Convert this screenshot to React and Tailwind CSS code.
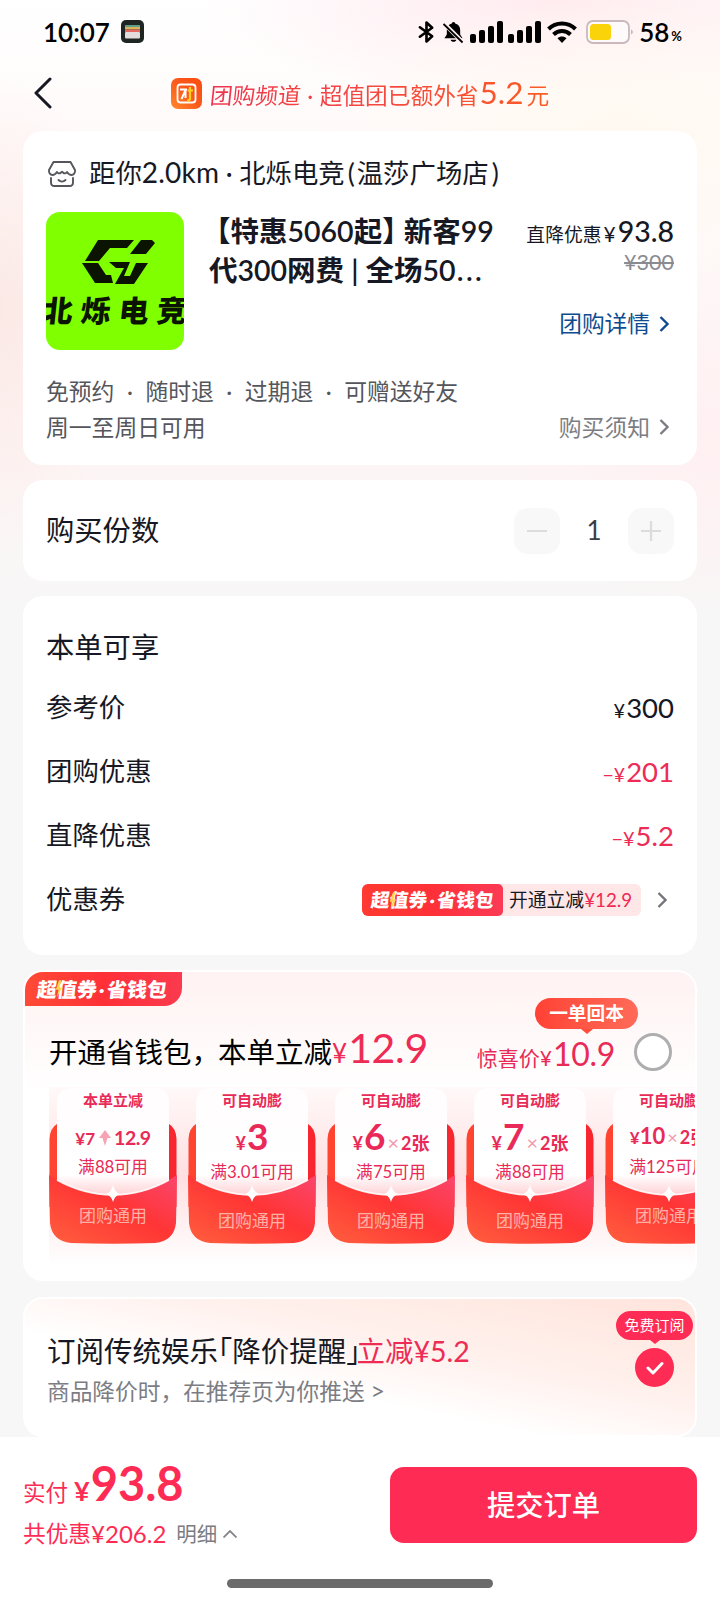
import React, { useState } from 'react';

const coupons = [
  { title: '本单立减', from: '7', to: '12.9', limit: '满88可用' },
  { title: '可自动膨', amount: '3', limit: '满3.01可用' },
  { title: '可自动膨', amount: '6', count: '2张', limit: '满75可用' },
  { title: '可自动膨', amount: '7', count: '2张', limit: '满88可用' },
  { title: '可自动膨', amount: '10', count: '2张', limit: '满125可用', small: true },
];

const Chevron = ({ className }) => (
  <svg viewBox="0 0 10 16" className={className} fill="none" stroke="currentColor" strokeWidth="2.4">
    <path d="M1.5 1 L8.5 8 L1.5 15" />
  </svg>
);

const Signal = () => (
  <svg viewBox="0 0 34 22" className="h-[22px] w-[34px] shrink-0">
    <rect x="0" y="13" width="6" height="9" rx="2" />
    <rect x="9" y="9" width="6" height="13" rx="2" />
    <rect x="18" y="5" width="6" height="17" rx="2" />
    <rect x="27" y="0" width="6" height="22" rx="2" />
  </svg>
);

const StatusBar = () => (
  <div className="flex h-16 items-center pl-[43px] pr-[38px] text-black">
    <span className="w-[78px] text-[26px] font-semibold leading-none">10:07</span>
    <svg viewBox="0 0 24 24" className="h-6 w-6">
      <rect width="23" height="23" rx="5" fill="#1f2523" />
      <rect x="4" y="5" width="15" height="3" fill="#5f9f8a" />
      <rect x="4" y="7" width="15" height="2.5" fill="#d8b45c" />
      <rect x="4" y="9.5" width="15" height="2.5" fill="#e2685f" />
      <rect x="4" y="12" width="15" height="6.5" rx="1" fill="#e3dcdc" />
    </svg>
    <div className="ml-auto flex items-center">
      <svg viewBox="0 0 18 24" className="mr-[8px] h-6 w-[17px]" fill="none" stroke="#000" strokeWidth="2.8" strokeLinejoin="round" strokeLinecap="round">
        <path d="M2 7 L15 16.5 L9 22 V2 L15 7.5 L2 17" />
      </svg>
      <svg viewBox="0 0 22 24" className="mr-[6px] h-6 w-[21px]">
        <path d="M11 1.5 c1.2 0 1.6.8 1.8 1.6 C16.5 4.2 18 7 18 10 V14.5 L20.5 18.5 H1.5 L4 14.5 V10 C4 7 5.5 4.2 9.2 3.1 C9.4 2.3 9.8 1.5 11 1.5 Z M8 20 h6 c-.5 3-5.5 3-6 0 Z" />
        <path d="M0.5 2.5 L20.5 22.5" stroke="#fff3f4" strokeWidth="4.5" />
        <path d="M0.5 3.5 L20.5 23" stroke="#000" strokeWidth="1.9" />
      </svg>
      <Signal />
      <span className="w-1" />
      <Signal />
      <svg viewBox="0 0 30 23" className="ml-[5px] h-[23px] w-[30px]" fill="none" stroke="#000" strokeWidth="4">
        <path d="M1.5 8 C9 0.6 21 0.6 28.5 8" />
        <path d="M6.5 13.5 C11.5 8.8 18.5 8.8 23.5 13.5" />
        <path d="M10.5 17.2 C13 15 17 15 19.5 17.2 L15 22 Z" fill="#000" stroke="none" />
      </svg>
      <svg viewBox="0 0 48 24" className="ml-[9px] h-6 w-12">
        <rect x="1" y="1" width="42" height="22" rx="6" fill="#fffafa" stroke="#c9b9bf" strokeWidth="1.8" />
        <rect x="4" y="4" width="21" height="16" rx="3.5" fill="#fad30a" />
        <path d="M45 9.5 c2.5 1 2.5 4 0 5 Z" fill="#c9b9bf" />
      </svg>
      <span className="ml-[5px] text-[26px] font-semibold leading-none">58</span>
      <span className="ml-[2px] mt-[8px] text-[13px] font-bold leading-none">%</span>
    </div>
  </div>
);

const Header = () => (
  <div className="flex h-[67px] items-center pb-[9px] pl-[34px]">
    <svg viewBox="0 0 18 32" className="h-8 w-[18px]" fill="none" stroke="#161823" strokeWidth="3" strokeLinecap="round" strokeLinejoin="round">
      <path d="M16 2 L2 16 L16 30" />
    </svg>
    <svg viewBox="0 0 31 31" className="ml-[119px] h-[31px] w-[31px]">
      <defs>
        <linearGradient id="channel" x1="0" y1="1" x2="1" y2="0">
          <stop offset="0" stopColor="#ff8a2a" />
          <stop offset="0.5" stopColor="#fb5a1c" />
          <stop offset="1" stopColor="#fb4a10" />
        </linearGradient>
      </defs>
      <rect width="31" height="31" rx="7" fill="url(#channel)" />
      <rect x="6.5" y="6.5" width="18" height="18" rx="3" fill="none" stroke="#fff" strokeWidth="1.8" />
      <path d="M9 11.500 H16 M15 11 L10.500 21 M14.500 11 V20" fill="none" stroke="#fff" strokeWidth="2" />
      <path d="M19 9 V21 L16.500 23.500 M16.500 12.500 H22" fill="none" stroke="#ffd21f" strokeWidth="2.2" />
    </svg>
    <div className="-mt-[3px] ml-[8px] flex h-10 items-baseline whitespace-nowrap bg-gradient-to-r from-[#ee3350] to-[#fb5a22] bg-clip-text text-[22.7px] leading-10 text-transparent">
      <span className="inline-block -skew-x-6 bg-gradient-to-r from-[#ee3350] to-[#f24040] bg-clip-text">团购频道</span>
      <span className="w-[19px] text-center">·</span>
      <span>超值团已额外省</span>
      <span className="ml-[1px] text-[31.5px]">5.2</span>
      <span className="ml-[3px]">元</span>
    </div>
  </div>
);

const ShopCard = () => (
  <section className="h-[334px] rounded-[20px] bg-white px-[23px] pt-[23px]">
    <div className="flex h-10 items-center text-[26.4px] text-[#161823]">
      <svg viewBox="0 0 30 28" className="ml-[1px] mr-[12px] h-7 w-[30px]" fill="none" stroke="#55565c" strokeWidth="1.9" strokeLinecap="round" strokeLinejoin="round">
        <path d="M6.5 2 H23.5 L28 10 C28.5 13 26.5 15 24.5 15 C22 15 21 13.5 20 12 C19 13.5 17.5 14 16 12.5 L15 11.8 L14 12.5 C12.5 14 11 13.5 10 12 C9 13.5 8 15 5.5 15 C3.5 15 1.5 13 2 10 Z" />
        <path d="M4 18 V22.5 C4 25 5.5 26 7.5 26 H22.5 C24.5 26 26 25 26 22.5 V18 M11.5 20 C13.5 22 16.5 22 18.5 20" />
      </svg>
      <span className="whitespace-nowrap">
        距你<span className="text-[28px] leading-none tracking-[0.2px]">2.0km</span><span className="inline-block w-[20px] text-center">·</span>北烁电竞<span className="ml-[3px] mr-[2px]">(</span>温莎广场店<span className="ml-[3px]">)</span>
      </span>
    </div>
    <div className="mt-[18px] flex">
      <div className="flex h-[138px] w-[138px] shrink-0 flex-col items-center overflow-hidden rounded-[14px] bg-[#80ff00] pt-[27px]">
        <svg viewBox="0 0 74 46" className="ml-[8px] h-[46px] w-[74px]" fill="#0b1400">
          <path d="M16 1 H52 L45 9 H28 L17 22 H3 Z" />
          <path d="M59 1 H70 L73 4 L64 15 H48 Z" />
          <path d="M0 24 H16 L24 36 H29 L31 44 H13 Z" />
          <path d="M27 23 H48 L42 37 H48 L54 24 H66 L52 45 H33 L42 29 H34 Z" />
        </svg>
        <div className="mt-[7px] -skew-x-6 whitespace-nowrap text-[30px] font-black leading-[36px] tracking-[8px] text-[#0b1400] [margin-right:-8px]">北烁电竞</div>
      </div>
      <div className="ml-[25px] w-[292px] whitespace-nowrap text-[28.5px] font-semibold leading-[39px] text-[#161823]">
        <div><span className="-ml-[7px]">【</span>特惠5060起】<span className="-ml-[7px]">新客99</span></div>
        <div>代300网费 | 全场50<span className="ml-[1px] tracking-[2.5px]">...</span></div>
      </div>
      <div className="flex flex-1 flex-col items-end">
        <div className="flex h-[38px] items-baseline whitespace-nowrap text-[#161823]">
          <span className="text-[18.8px]">直降优惠</span>
          <span className="ml-[2px] text-[21px]">¥</span>
          <span className="ml-[2px] text-[28.5px] font-medium leading-[39px]">93.8</span>
        </div>
        <span className="text-[21.5px] leading-6 text-[#8a8b91] line-through">¥300</span>
        <div className="mt-[33px] flex items-center text-[22.7px] leading-[34px] text-[#0f4c8f]">
          团购详情
          <Chevron className="ml-[9px] mr-[5px] h-4 w-[10px]" />
        </div>
      </div>
    </div>
    <div className="mt-[23px] flex h-9 items-center text-[22.8px] text-[#55565c]">
      {['免预约', '随时退', '过期退', '可赠送好友'].map((t, i) => (
        <React.Fragment key={t}>
          {i > 0 && <span className="w-[31px] text-center">·</span>}
          <span>{t}</span>
        </React.Fragment>
      ))}
    </div>
    <div className="flex h-9 items-center justify-between text-[22.8px] text-[#55565c]">
      <span>周一至周日可用</span>
      <span className="flex items-center text-[#7c7d83]">
        购买须知
        <Chevron className="ml-[9px] mr-[5px] h-4 w-[10px]" />
      </span>
    </div>
  </section>
);

const QuantityCard = () => {
  const [count, setCount] = useState(1);
  return (
    <section className="mt-[15px] flex h-[101px] items-center rounded-[20px] bg-white px-[23px]">
      <span className="text-[28.3px] text-[#161823]">购买份数</span>
      <button onClick={() => setCount(Math.max(1, count - 1))} className="ml-auto flex h-[46px] w-[46px] items-center justify-center rounded-[14px] bg-[#f8f8f8]">
        <span className="h-[2px] w-5 bg-[#dcdcdd]" />
      </button>
      <span className="w-[68px] text-center text-[26px] text-[#3c3d44]">{count}</span>
      <button onClick={() => setCount(count + 1)} className="flex h-[46px] w-[46px] items-center justify-center rounded-[14px] bg-[#f8f8f8]">
        <svg viewBox="0 0 20 20" className="h-5 w-5" stroke="#dcdcdd" strokeWidth="2.2">
          <path d="M0 10 H20 M10 0 V20" />
        </svg>
      </button>
    </section>
  );
};

// Marque de la cagnotte, l'éclair passe par-dessus le texte
const WalletMark = ({ className }) => (
  <span className={`relative whitespace-nowrap font-black text-white ${className}`}>
    <span className="inline-block -skew-x-6">超值券<span className="mx-[1px] inline-block w-[8px] text-center">·</span>省钱包</span>
    <svg viewBox="0 0 10 22" className="absolute left-[18px] top-[5px] h-[20px] w-[8px]">
      <path d="M5 0 L1 12 H4.5 L2 22 L9 9 H5.5 L8 0 Z" fill="#ffd84a" />
    </svg>
  </span>
);

const PriceRow = ({ label, children }) => (
  <div className="flex h-16 items-center justify-between">
    <span className="text-[26.4px] text-[#161823]">{label}</span>
    {children}
  </div>
);

const DiscountCard = () => (
  <section className="mt-[15px] h-[359px] rounded-[20px] bg-white px-[23px] pt-[30px]">
    <div className="flex h-[50px] items-center pb-[8px] text-[28.3px] text-[#161823]">本单可享</div>
    <PriceRow label="参考价">
      <span className="text-[27.5px] text-[#161823]"><span className="mr-[1px] text-[20px]">¥</span>300</span>
    </PriceRow>
    <PriceRow label="团购优惠">
      <span className="text-[27.5px] text-[#ee2b55]"><span className="mr-[1px] text-[19.5px]">−¥</span>201</span>
    </PriceRow>
    <PriceRow label="直降优惠">
      <span className="text-[27.5px] text-[#ee2b55]"><span className="mr-[1px] text-[20px]">−¥</span>5.2</span>
    </PriceRow>
    <PriceRow label="优惠券">
      <div className="flex items-center">
        <div className="flex h-8 w-[279px] items-center overflow-hidden rounded-[6px] bg-[#ffe6e7]">
          <div className="flex h-8 w-[141px] shrink-0 items-center justify-center rounded-r-[5px] bg-gradient-to-r from-[#ff3a30] via-[#ff3038] to-[#fb3a55]">
            <WalletMark className="text-[18.8px]" />
          </div>
          <span className="ml-[6px] whitespace-nowrap text-[18.8px] text-[#161823]">开通立减<span className="text-[18.8px] text-[#ee2b55]">¥12.9</span></span>
        </div>
        <Chevron className="ml-[16px] mr-[7px] h-4 w-[10px] text-[#75767b]" />
      </div>
    </PriceRow>
  </section>
);

const Envelope = ({ id }) => (
  <svg viewBox="0 0 128 158" className="absolute inset-0 h-[158px] w-[128px]">
    <defs>
      <linearGradient id={`back${id}`} x1="0" y1="0" x2="1" y2="0">
        <stop offset="0" stopColor="#ff4530" />
        <stop offset="1" stopColor="#f8252f" />
      </linearGradient>
      <linearGradient id={`front${id}`} x1="0.1" y1="1" x2="1" y2="0.1">
        <stop offset="0" stopColor="#ff5b3d" />
        <stop offset="0.55" stopColor="#ff3535" />
        <stop offset="1" stopColor="#fb4468" />
      </linearGradient>
      <linearGradient id={`paper${id}`} x1="0" y1="0" x2="0" y2="1">
        <stop offset="0" stopColor="#fffdfd" />
        <stop offset="0.78" stopColor="#ffffff" />
        <stop offset="1" stopColor="#ffc9cd" />
      </linearGradient>
    </defs>
    <path d="M8 37 Q1 41 0.5 52 V120 H127.5 V52 Q127 41 120 37 Z" fill={`url(#back${id})`} />
    <path d="M8 16 Q8 1 23 1 H105 Q120 1 120 16 V112 H8 Z" fill={`url(#paper${id})`} />
    <path d="M0 88 Q30 107.5 64 108 Q98 107.5 128 88 L127 136 Q125 154 106 156 Q64 157.5 22 156 Q3 154 1 136 Z" fill={`url(#front${id})`} />
    <path d="M8 93 Q34 107.5 64 108 Q94 107.5 120 93" fill="none" stroke="#fff" strokeOpacity="0.9" strokeWidth="1.6" />
    <path d="M64 98 Q65.5 105 71 107 Q65.5 109 64 115 Q62.5 109 57 107 Q62.5 105 64 98 Z" fill="#fff" />
  </svg>
);

const Coupon = ({ item, id }) => (
  <div className="relative h-[158px] w-[128px] shrink-0">
    <Envelope id={id} />
    <div className="relative flex flex-col items-center whitespace-nowrap text-[#e92a58]">
      <span className="mt-[2px] h-6 text-[15px] font-bold leading-[22px]">{item.title}</span>
      {item.from ? (
        <div className="flex h-[42px] items-center pt-[8px] text-[19.5px] font-bold leading-none">
          <span className="text-[17px]">¥{item.from}</span>
          <svg viewBox="0 0 12 16" className="mx-[4px] h-4 w-3">
            <path d="M6 0 L12 8 H8.5 L6 16 L3.5 8 H0 Z" fill="#f7a3b3" />
          </svg>
          <span className="-ml-[1px] tracking-[-0.5px]">{item.to}</span>
        </div>
      ) : item.small ? (
        <div className="flex h-[42px] items-baseline font-bold leading-[46px]">
          <span className="text-[17px]">¥</span>
          <span className="text-[22px]">{item.amount}</span>
          <span className="mx-[2px] text-[18px] font-normal text-[#f19aae]">×</span>
          <span className="text-[18px]">{item.count}</span>
        </div>
      ) : (
        <div className="flex h-[47px] items-baseline font-bold leading-[45px]">
          <span className="mr-[1px] text-[18px]">¥</span>
          <span className="text-[37px]">{item.amount}</span>
          {item.count && (
            <>
              <span className="mx-[2px] text-[20px] font-normal text-[#f19aae]">×</span>
              <span className="text-[18px]">{item.count}</span>
            </>
          )}
        </div>
      )}
      <span className="h-6 text-[16.8px] leading-6">{item.limit}</span>
      <span className="mt-[25px] text-[17px] leading-6 text-[#ffb0a6]">团购通用</span>
    </div>
  </div>
);

const WalletCard = () => (
  <section className="mt-[15px] flex h-[311px] flex-col overflow-hidden rounded-[20px] border-2 border-white bg-gradient-to-b from-[#fff2f2] to-white to-40%">
    <div className="flex h-[34px] w-[157px] shrink-0 items-center justify-center rounded-br-[18px] bg-gradient-to-r from-[#ff4a36] via-[#ff3037] to-[#fb3a4e] pr-[4px]">
      <WalletMark className="text-[20px]" />
    </div>
    <div className="relative flex h-[81px] justify-between pl-[24px] pr-[80px]">
      <div className="flex h-[81px] items-baseline whitespace-nowrap pt-[2px] leading-[80px] text-[#ee2b55]">
        <span className="text-[28.5px] text-black">开通省钱包<span className="-mr-[2px]">，</span>本单立减</span>
        <span className="text-[26px]">¥</span>
        <span className="ml-[1px] text-[41px] tracking-[-0.3px]">12.9</span>
      </div>
      <div className="flex h-[81px] items-baseline whitespace-nowrap pt-[8px] leading-[80px] text-[#e92a58]">
        <span className="text-[21px]">惊喜价¥</span>
        <span className="ml-[1px] text-[32px] tracking-[-0.3px]">10.9</span>
      </div>
      <span className="absolute right-[23px] top-[27px] h-[38px] w-[38px] rounded-full border-[3px] border-[#aeaeb0] bg-white" />
      <div className="absolute right-[57px] top-[-8px] flex flex-col items-center">
        <div className="flex h-[31px] w-[103px] items-center justify-center rounded-full bg-gradient-to-r from-[#ff4134] to-[#ff6a58] text-[18.7px] font-bold text-white">一单回本</div>
        <svg viewBox="0 0 12 5" className="h-[5px] w-3"><path d="M0 0 H12 L6 5 Z" fill="#ff4d3c" /></svg>
      </div>
    </div>
    <div className="ml-[24px] flex h-[178px] gap-[11px] overflow-hidden bg-gradient-to-b from-[#fff9f9] via-[#ffdfe1] to-white">
      {coupons.map((c, i) => <Coupon key={i} item={c} id={i} />)}
    </div>
  </section>
);

const ReminderCard = () => (
  <section className="mt-[16px] flex h-[140px] justify-between rounded-[20px] border-2 border-white bg-[linear-gradient(to_top_right,#ffffff_38%,#fff1ed_62%,#ffe4dc)] pl-[22px] pr-[2px]">
    <div className="pt-[30px] text-[#161823]">
      <div className="whitespace-nowrap text-[28.5px] leading-[44px]">
        订阅传统娱乐<span className="[font-feature-settings:'halt']">「</span>降价提醒<span className="-mr-[4px] [font-feature-settings:'halt']">」</span>
        <span className="text-[#ee2b55]">立减¥5.2</span>
      </div>
      <div className="text-[22.7px] leading-[38px] text-[#7c7d83]">商品降价时，在推荐页为你推送 <span className="text-[25px] leading-none">&gt;</span></div>
    </div>
    <div className="flex flex-col items-center pt-[12px]">
      <div className="flex h-[29px] w-[77px] items-center justify-center rounded-full bg-[#fe2c55] text-[15px] text-white">免费订阅</div>
      <svg viewBox="0 0 10 4" className="h-1 w-[10px]"><path d="M0 0 H10 L5 4 Z" fill="#fe2c55" /></svg>
      <div className="mt-[4px] flex h-[39px] w-[39px] items-center justify-center rounded-full bg-[#fe2c55]">
        <svg viewBox="0 0 18 14" className="h-[14px] w-[18px]" fill="none" stroke="#fff" strokeWidth="3" strokeLinecap="round" strokeLinejoin="round">
          <path d="M2 7 L7 12 L16 2.5" />
        </svg>
      </div>
    </div>
  </section>
);

const SubmitBar = () => (
  <footer className="h-[163px] bg-white px-[23px] pt-[30px]">
    <div className="flex h-[88px] justify-between">
      <div className="whitespace-nowrap text-[#fe2c55]">
        <div className="flex h-[45px] items-baseline leading-[32px]">
          <span className="text-[22.5px]">实付</span>
          <span className="ml-[6px] text-[27px] font-bold">¥</span>
          <span className="ml-[1px] text-[47px] font-bold">93.8</span>
        </div>
        <div className="flex items-center text-[22.7px] leading-[44px]">
          共优惠<span className="text-[24px]">¥206.2</span>
          <span className="ml-[10px] text-[20.5px] text-[#7c7d83]">明细</span>
          <svg viewBox="0 0 14 8" className="ml-[6px] h-2 w-[14px]" fill="none" stroke="#85868b" strokeWidth="1.8"><path d="M0.5 7.5 L7 1 L13.5 7.5" /></svg>
        </div>
      </div>
      <button className="h-[76px] w-[307px] rounded-[14px] bg-[#fe2c55] text-[28.3px] font-medium text-white">提交订单</button>
    </div>
    <div className="mx-auto mt-[24px] h-[9px] w-[266px] rounded-full bg-[#6b6b6b]" />
  </footer>
);

const App = () => (
  <div className="flex h-[1600px] w-[720px] flex-col overflow-hidden bg-[#f7f7f7] bg-[radial-gradient(ellipse_130px_230px_at_0_310px,#fbe9e5,transparent),radial-gradient(ellipse_200px_180px_at_720px_440px,#fff0f2,transparent),radial-gradient(ellipse_300px_160px_at_620px_130px,#fff9f1,transparent),radial-gradient(ellipse_360px_100px_at_560px_0,#ffe9ef,transparent),linear-gradient(to_bottom,#ffffff,#fffafa_130px,#fdf5f5_460px,#f7f7f7_620px)] font-['Lato','Noto_Sans_CJK_SC',sans-serif]">
    <StatusBar />
    <Header />
    <main className="h-[1306px] px-[23px]">
      <ShopCard />
      <QuantityCard />
      <DiscountCard />
      <WalletCard />
      <ReminderCard />
    </main>
    <SubmitBar />
  </div>
);

export default App;
